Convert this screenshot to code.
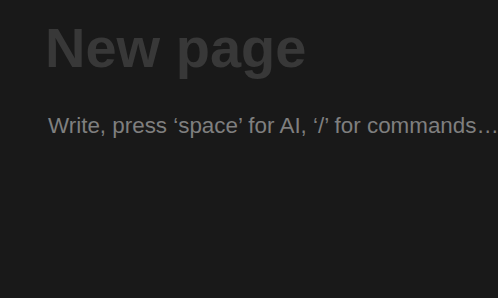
export default function App() {
  return (
    <div className="h-[298px] w-[498px] overflow-hidden bg-[#191919] font-['Liberation_Sans',Arial,sans-serif]">
      <div className="pl-[45px] pt-[14px]">
        {/* Title placeholder */}
        <h1 className="whitespace-nowrap text-[56px] font-bold leading-[67px] text-[#383838]">
          New page
        </h1>
        {/* Body placeholder */}
        <p className="mt-[28px] whitespace-nowrap pl-[3px] text-[22.4px] leading-[34px] text-[#7f7f7f]">
          Write, press ‘space’ for AI, ‘/’ for commands…
        </p>
      </div>
    </div>
  );
}
